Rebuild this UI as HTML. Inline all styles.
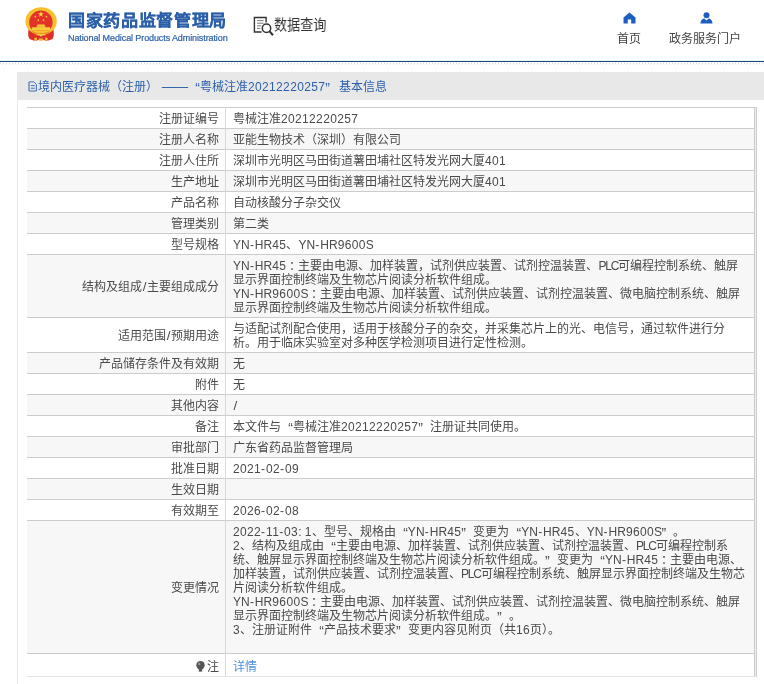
<!DOCTYPE html>
<html lang="zh-CN">
<head>
<meta charset="utf-8">
<title>国家药品监督管理局 数据查询</title>
<style>
html,body{margin:0;padding:0;background:#fff;}
body{width:764px;height:684px;overflow:hidden;position:relative;font-family:"Liberation Sans",sans-serif;font-size:12px;color:#444;}
#wrap{position:absolute;left:0;top:0;width:764px;height:684px;overflow:hidden;will-change:transform;}
.abs{position:absolute;white-space:nowrap;}
#emblem{left:20px;top:2px;width:42px;height:44px;}
#t1{left:68px;top:10px;font-size:15.4px;font-weight:bold;color:#2b5fa9;letter-spacing:0.91px;line-height:22px;transform:scale(1.11,1);transform-origin:0 0;will-change:transform;-webkit-text-stroke:0.15px #2b5fa9;}
#t2{left:68px;top:33px;font-size:9px;color:#2b5fa9;line-height:11px;letter-spacing:-0.1px;-webkit-text-stroke:0.2px #2b5fa9;}
#qicon{left:253px;top:16px;width:22px;height:22px;}
#qtext{left:274px;top:15px;font-size:15px;color:#333;line-height:20px;transform:scale(0.873,1);transform-origin:0 0;will-change:transform;}
#homei{left:623px;top:12px;width:13px;height:12px;}
#homet{left:617px;top:31px;font-size:12px;line-height:16px;color:#444;}
#useri{left:700px;top:12px;width:13px;height:12px;}
#usert{left:669px;top:31px;font-size:12px;line-height:16px;color:#444;}
#bline{left:0;top:60px;width:764px;height:1px;background:#1b4579;border-top:1px solid #e9f7fc;}
#dots{left:0;top:63px;width:764px;height:1px;background:repeating-linear-gradient(90deg,#d6d6d6 0,#d6d6d6 1px,#fff 1px,#fff 3px);}
#dots2{left:0;top:64px;width:764px;height:1px;background:repeating-linear-gradient(90deg,#fff 0,#fff 2px,#ededed 2px,#ededed 3px);}
#box{left:17px;top:72px;width:746px;height:612px;border-left:1px solid #e8e8e8;}
#tbar{left:17px;top:72px;width:747px;height:28px;background:#e8e8e8;}
#ttext{left:38px;top:80px;font-size:12px;line-height:14px;color:#2b5fa9;}
#ticon{left:28px;top:81px;width:9px;height:11px;}
table{position:absolute;left:27px;top:107px;width:728px;border-collapse:collapse;border-spacing:0;table-layout:fixed;}
td{border-top:1px solid #ccc;padding:4px 6px 2px 7px;line-height:14px;font-size:12px;color:#4a4a4a;vertical-align:middle;white-space:nowrap;}
td.l{width:185px;text-align:right;padding:4px 6px 2px 7px;border-right:1px solid #d8d8d8;}
td.v{border-right:1px solid #ccc;}
tr.g td{background:#f7f7f7;}
tr.last td{border-bottom:1px solid #e2e2e2;padding-top:6px;padding-bottom:2px;}
#rb{left:755px;top:107px;width:1px;height:569px;background:#eee;border-right:1px solid #ccc;border-top:1px solid #ccc;}
a{color:#4a90e2;text-decoration:none;}
.q{display:inline-block;width:12px;font-size:14px;line-height:14px;vertical-align:top;position:relative;top:1px;}
.sl{font-size:13.5px;line-height:14px;padding:0 0.6px;}
.d{letter-spacing:0.35px;}
.e{letter-spacing:0.1px;}
.s{letter-spacing:-0.6px;}
.p{letter-spacing:-1.2px;}
.h{letter-spacing:0.9px;}
.c{position:relative;left:3px;}
.ql{text-align:right;}
.qr{text-align:left;}
</style>
</head>
<body>
<div id="wrap">
<svg id="emblem" class="abs" viewBox="20 2 42 44">
<defs><clipPath id="cp"><rect x="20" y="2" width="42" height="28.4"/></clipPath></defs>
<path d="M28.6 29C27.9 33 28 36 29.2 38.5C31.5 40.3 34.5 41 37 40.4L41 38.8L45 40.4C47.5 41 50.5 40.3 52.8 38.5C54 36 54.1 33 53.4 29Z" fill="#db2f27"/>
<path d="M34 38.2l2.6-.9.5 2.6-2.3.6zM48 38.2l-2.6-.9-.5 2.6 2.3.6zM38.6 38.6h4.8l-.6 2.2h-3.6z" fill="#f2b52c"/>
<ellipse cx="41.1" cy="21.2" rx="15.7" ry="13.9" fill="#f6c12c"/>
<circle cx="40.9" cy="22.3" r="11.7" fill="#e3342a" clip-path="url(#cp)"/>
<path d="M40.9 11.3l.75 2h2.1l-1.7 1.3.65 2.05-1.8-1.25-1.8 1.25.65-2.05-1.7-1.3h2.1z" fill="#f8d648"/>
<circle cx="35.3" cy="16.6" r="0.9" fill="#f4c840"/><circle cx="46.5" cy="16.6" r="0.9" fill="#f4c840"/><circle cx="38.3" cy="20.2" r="0.85" fill="#f4c840"/><circle cx="43.5" cy="20.2" r="0.85" fill="#f4c840"/>
<path d="M36.2 27.4L37.6 24.6H44.4L45.8 27.4Z" fill="#f8cf3a"/>
<rect x="37" y="25.8" width="8" height="1.7" fill="#f3b933"/>
<rect x="31.8" y="27.3" width="18.5" height="3.2" fill="#f8cd3c"/>
<path d="M31.5 31.6C35 35.4 47 35.4 50.5 31.6L49.5 30.9C46 33.8 36 33.8 32.5 30.9Z" fill="#e58a24"/>
<path d="M35.5 35.6C37.5 33.4 39.5 33.2 41 34.4C42.5 33.2 44.5 33.4 46.5 35.6C44.5 35 42.6 35.3 41 36.8C39.4 35.3 37.5 35 35.5 35.6Z" fill="#f9d24a"/>
</svg>
<div id="t1" class="abs">国家药品监督管理局</div>
<div id="t2" class="abs">National Medical Products Administration</div>
<svg id="qicon" class="abs" viewBox="0 0 22 22" fill="none" stroke="#333" stroke-width="1.4">
<path d="M8.6 16H1.4V1.5h11.7v5"/>
<path d="M4 4.6h6.6M4 7.2h6.6M4 9.8h4.2M4 12.4h3.2" stroke-width="1" stroke="#777"/>
<circle cx="13.5" cy="12.2" r="4.2" fill="#fff" stroke-width="1.5"/>
<path d="M16.6 15.4l3.4 3.8" stroke-width="2.1"/>
</svg>
<div id="qtext" class="abs">数据查询</div>
<svg id="homei" class="abs" viewBox="0 0 13 12"><path d="M6.5 0.5L0.5 5.6V11.5H4.8V7.6H8.2V11.5H12.5V5.6Z" fill="#1c5fbf"/></svg>
<div id="homet" class="abs">首页</div>
<svg id="useri" class="abs" viewBox="0 0 13 12"><circle cx="6.5" cy="3.2" r="3" fill="#1c5fbf"/><path d="M0.5 11.5C0.5 8.2 3 6.6 4.3 6.6L6.5 8.4 8.7 6.6C10 6.6 12.5 8.2 12.5 11.5Z" fill="#1c5fbf"/></svg>
<div id="usert" class="abs">政务服务门户</div>
<div id="bline" class="abs"></div>
<div id="dots" class="abs"></div>
<div id="dots2" class="abs"></div>
<div id="box" class="abs"></div>
<div id="tbar" class="abs"></div>
<svg id="ticon" class="abs" viewBox="0 0 9 11" fill="none" stroke="#3f6db5" stroke-width="1"><path d="M1 0.9H5.8L8.4 3.4V10H1Z"/><path d="M1 0.9V10" stroke="#7f9fd0" stroke-width="1.2"/><path d="M2.8 4.6h4M2.8 7.2h4"/></svg>
<div id="ttext" class="abs">境内医疗器械（注册）<span style="margin-left:5px;display:inline-block;transform:scaleX(1.08);-webkit-text-stroke:0.3px #2b5fa9">——</span><span class="q ql" style="width:13px">“</span>粤械注准<span class="d">20212220257</span><span class="q qr" style="width:14px">”</span>基本信息</div>
<table>
<tr><td class="l">注册证编号</td><td class="v">粤械注准<span class="d">20212220257</span></td></tr>
<tr class="g"><td class="l">注册人名称</td><td class="v">亚能生物技术（深圳）有限公司</td></tr>
<tr><td class="l">注册人住所</td><td class="v">深圳市光明区马田街道薯田埔社区特发光网大厦<span class="d">401</span></td></tr>
<tr class="g"><td class="l">生产地址</td><td class="v">深圳市光明区马田街道薯田埔社区特发光网大厦<span class="d">401</span></td></tr>
<tr><td class="l">产品名称</td><td class="v">自动核酸分子杂交仪</td></tr>
<tr class="g"><td class="l">管理类别</td><td class="v">第二类</td></tr>
<tr><td class="l">型号规格</td><td class="v"><span class="e">YN</span><span class="h">-</span><span class="e">HR</span><span class="d">45</span>、<span class="e">YN</span><span class="h">-</span><span class="e">HR</span><span class="d">9600</span><span class="s">S</span></td></tr>
<tr class="g"><td class="l">结构及组成<span class="sl">/</span>主要组成成分</td><td class="v"><span class="e">YN</span><span class="h">-</span><span class="e">HR</span><span class="d">45</span><span class="c">：</span>主要由电源、加样装置，试剂供应装置、试剂控温装置、<span class="p">PLC</span>可编程控制系统、触屏<br>显示界面控制终端及生物芯片阅读分析软件组成。<br><span class="e">YN</span><span class="h">-</span><span class="e">HR</span><span class="d">9600</span><span class="s">S</span><span class="c">：</span>主要由电源、加样装置、试剂供应装置、试剂控温装置、微电脑控制系统、触屏<br>显示界面控制终端及生物芯片阅读分析软件组成。</td></tr>
<tr><td class="l">适用范围<span class="sl">/</span>预期用途</td><td class="v">与适配试剂配合使用，适用于核酸分子的杂交，并采集芯片上的光、电信号，通过软件进行分<br>析。用于临床实验室对多种医学检测项目进行定性检测。</td></tr>
<tr class="g"><td class="l">产品储存条件及有效期</td><td class="v">无</td></tr>
<tr><td class="l">附件</td><td class="v">无</td></tr>
<tr class="g"><td class="l">其他内容</td><td class="v"><span class="sl">/</span></td></tr>
<tr><td class="l">备注</td><td class="v">本文件与<span class="q ql">“</span>粤械注准<span class="d">20212220257</span><span class="q qr">”</span>注册证共同使用。</td></tr>
<tr class="g"><td class="l">审批部门</td><td class="v">广东省药品监督管理局</td></tr>
<tr><td class="l">批准日期</td><td class="v"><span class="d">2021</span><span class="h">-</span><span class="d">02</span><span class="h">-</span><span class="d">09</span></td></tr>
<tr class="g"><td class="l">生效日期</td><td class="v">&nbsp;</td></tr>
<tr><td class="l">有效期至</td><td class="v"><span class="d">2026</span><span class="h">-</span><span class="d">02</span><span class="h">-</span><span class="d">08</span></td></tr>
<tr class="g"><td class="l">变更情况</td><td class="v"><span class="d">2022</span><span class="h">-</span><span class="d">11</span><span class="h">-</span><span class="d">03</span>: <span class="d">1</span>、型号、规格由<span class="q ql">“</span><span class="e">YN</span><span class="h">-</span><span class="e">HR</span><span class="d">45</span><span class="q qr">”</span>变更为<span class="q ql">“</span><span class="e">YN</span><span class="h">-</span><span class="e">HR</span><span class="d">45</span>、<span class="e">YN</span><span class="h">-</span><span class="e">HR</span><span class="d">9600</span><span class="s">S</span><span class="q qr">”</span>。<br><span class="d">2</span>、结构及组成由<span class="q ql">“</span>主要由电源、加样装置、试剂供应装置、试剂控温装置、<span class="p">PLC</span>可编程控制系<br>统、触屏显示界面控制终端及生物芯片阅读分析软件组成。<span class="q qr">”</span>变更为<span class="q ql">“</span><span class="e">YN</span><span class="h">-</span><span class="e">HR</span><span class="d">45</span><span class="c">：</span>主要由电源、<br>加样装置，试剂供应装置、试剂控温装置、<span class="p">PLC</span>可编程控制系统、触屏显示界面控制终端及生物芯<br>片阅读分析软件组成。<br><span class="e">YN</span><span class="h">-</span><span class="e">HR</span><span class="d">9600</span><span class="s">S</span><span class="c">：</span>主要由电源、加样装置、试剂供应装置、试剂控温装置、微电脑控制系统、触屏<br>显示界面控制终端及生物芯片阅读分析软件组成。<span class="q qr">”</span>。<br><span class="d">3</span>、注册证附件<span class="q ql">“</span>产品技术要求<span class="q qr">”</span>变更内容见附页（共<span class="d">16</span>页）。<br>&nbsp;</td></tr>
<tr class="last"><td class="l"><svg width="9" height="11" viewBox="0 0 9 11" style="vertical-align:-1px;margin-right:2px"><circle cx="4.5" cy="4.3" r="4.2" fill="#555"/><rect x="2.8" y="8" width="3.4" height="2.6" fill="#555"/><circle cx="3.2" cy="3" r="1.2" fill="#999"/></svg>注</td><td class="v"><a>详情</a></td></tr>
</table>
<div id="rb" class="abs"></div>
</div>
</body>
</html>
